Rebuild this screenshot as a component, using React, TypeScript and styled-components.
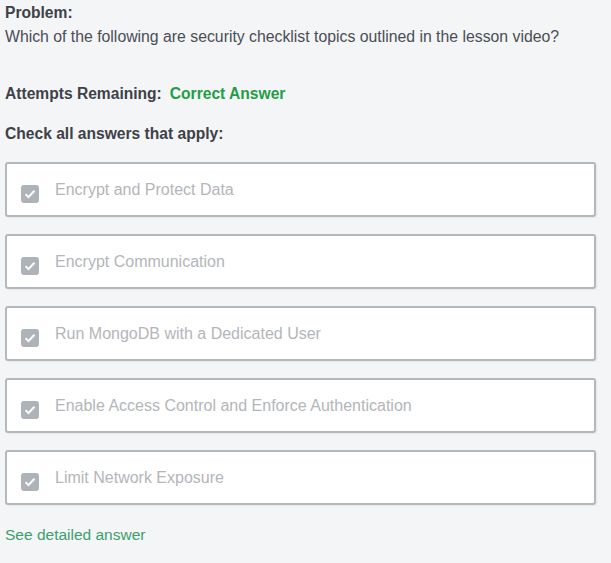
import React from "react";
import styled, { createGlobalStyle } from "styled-components";

const Global = createGlobalStyle`
  html, body { margin: 0; padding: 0; background: #f4f5f7; }
  body { font-family: "Liberation Sans", Arial, sans-serif; }
`;

const Page = styled.div`
  padding: 4px 15px 20px 5px;
  display: flex;
  flex-direction: column;
`;

const Label = styled.div<{ $mt?: number }>`
  font-weight: bold;
  font-size: 15.6px;
  color: #3d4148;
  line-height: 17px;
  margin-top: ${(p) => p.$mt ?? 0}px;
`;

const Question = styled.div`
  font-size: 15.8px;
  color: #4a4e54;
  line-height: 18px;
  margin-top: 7px;
`;

const Green = styled.span`
  color: #1f9e47;
  margin-left: 8px;
`;

const List = styled.div`
  display: flex;
  flex-direction: column;
  gap: 17px;
  margin-top: 20px;
`;

const Choice = styled.div`
  height: 51px;
  border: 2px solid #b4b8bc;
  border-radius: 3px;
  background: #fff;
  box-shadow: 1px 1px 2px rgba(0, 0, 0, 0.06);
  display: flex;
  align-items: center;
  padding: 0 14px;
  gap: 16px;
`;

const Box = styled.span`
  width: 18px;
  height: 18px;
  border-radius: 3px;
  background: #adb3b9;
  display: flex;
  align-items: center;
  justify-content: center;
  margin-top: 8px;
  flex: none;
`;

const ChoiceText = styled.span`
  font-size: 16px;
  color: #b3b6ba;
`;

const Link = styled.a`
  color: #3ca06c;
  font-size: 15.5px;
  margin-top: 21px;
  text-decoration: none;
`;

const choices = [
  "Encrypt and Protect Data",
  "Encrypt Communication",
  "Run MongoDB with a Dedicated User",
  "Enable Access Control and Enforce Authentication",
  "Limit Network Exposure",
];

export default function App() {
  return (
    <>
      <Global />
      <Page>
        <Label>Problem:</Label>
        <Question>
          Which of the following are security checklist topics outlined in the lesson video?
        </Question>
        <Label $mt={39}>
          Attempts Remaining:<Green>Correct Answer</Green>
        </Label>
        <Label $mt={23}>Check all answers that apply:</Label>
        <List>
          {choices.map((c) => (
            <Choice key={c}>
              <Box>
                <svg width="12" height="10" viewBox="0 0 12 10">
                  <path d="M1.5 5.2 L4.5 8 L10.5 1.8" fill="none" stroke="#fff" strokeWidth="2" />
                </svg>
              </Box>
              <ChoiceText>{c}</ChoiceText>
            </Choice>
          ))}
        </List>
        <Link href="#">See detailed answer</Link>
      </Page>
    </>
  );
}
